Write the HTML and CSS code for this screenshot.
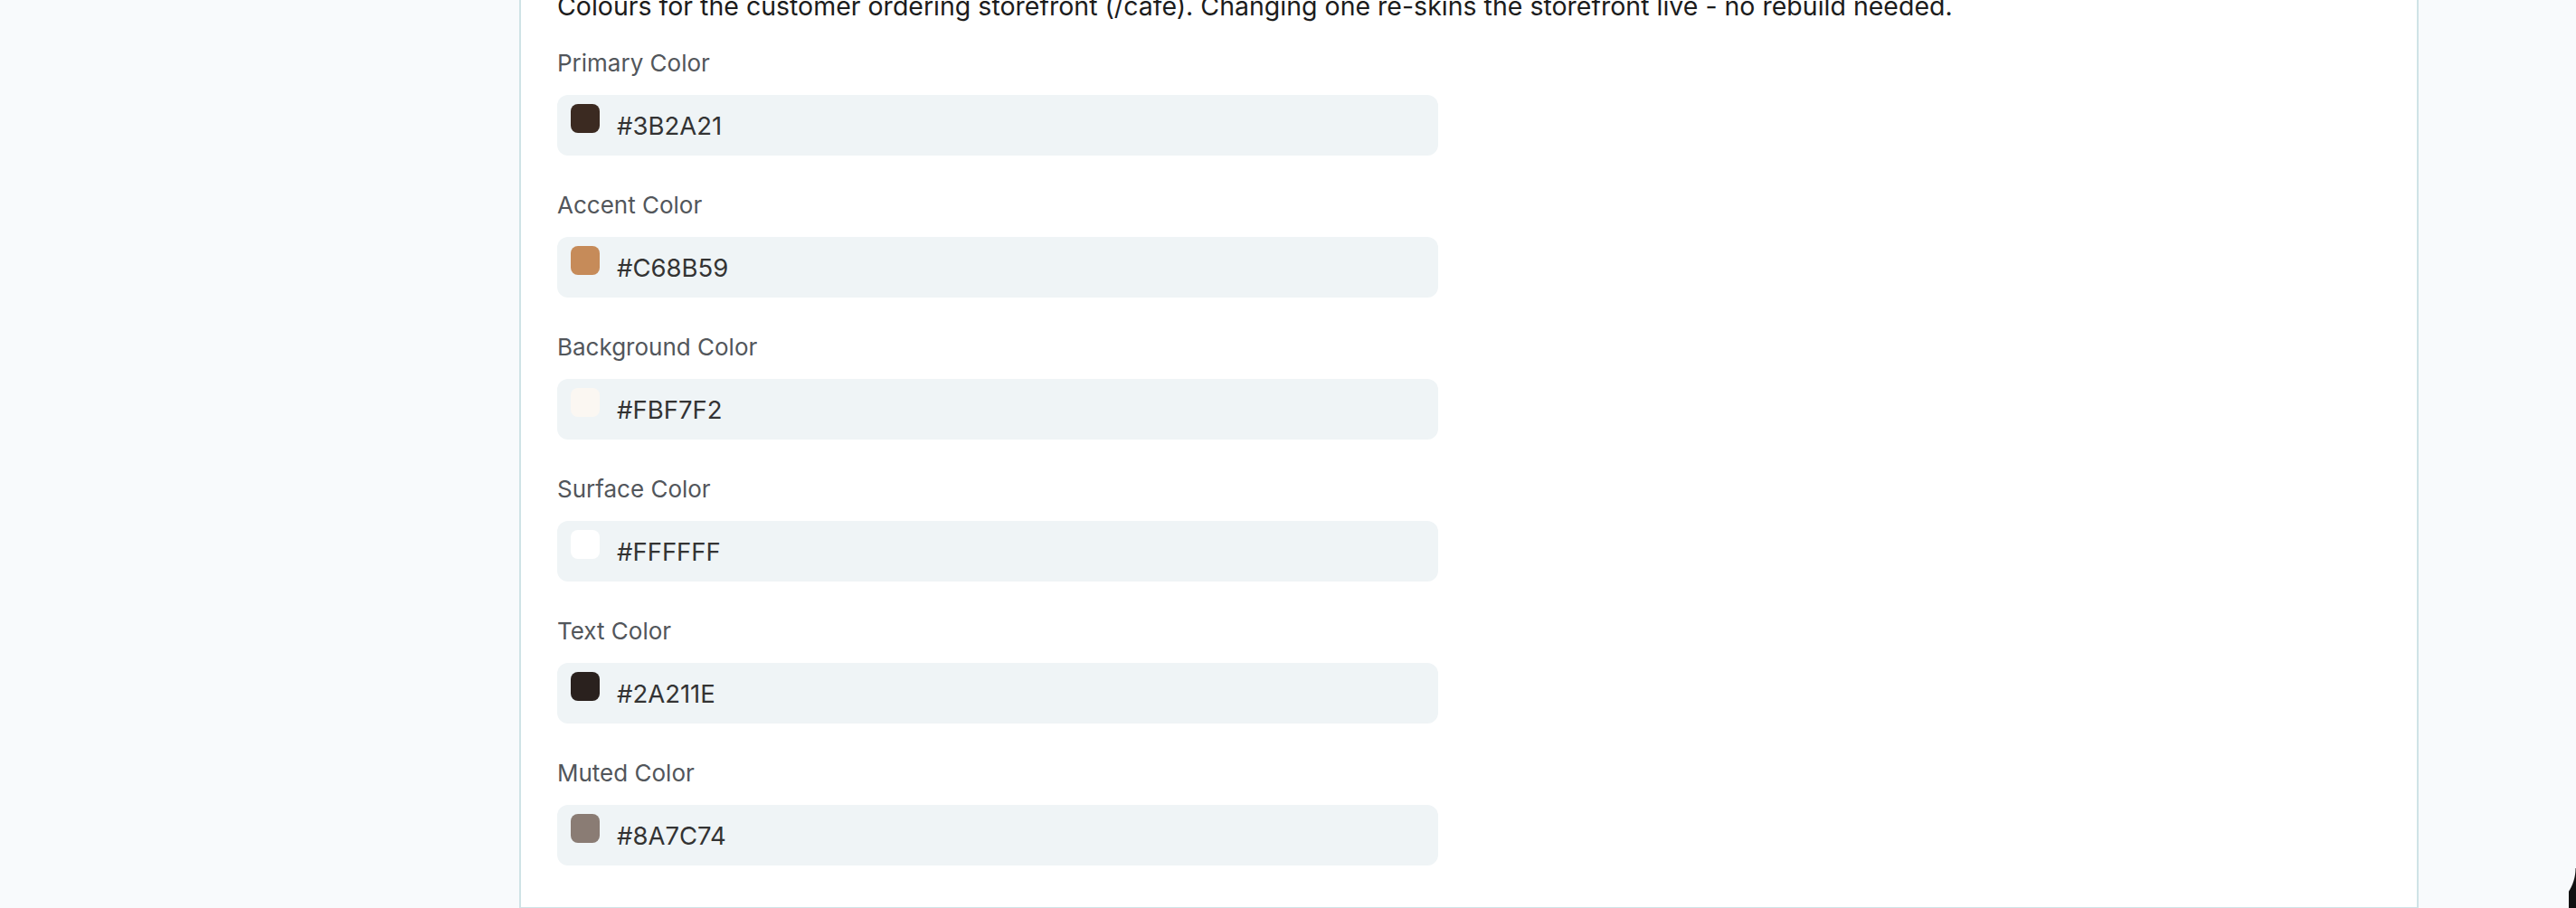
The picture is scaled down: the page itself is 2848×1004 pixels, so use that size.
FILE: index.html
```html
<!DOCTYPE html>
<html lang="en">
<head>
  <meta charset="UTF-8">
  <title>Storefront Theme</title>
  <link rel="stylesheet" href="styles.css">
</head>
<body>
  <div class="main">
    <div class="card">
      <p class="card-desc">Colours for the customer ordering storefront (/cafe). Changing one re-skins the storefront live - no rebuild needed.</p>

      <div class="fields">
        <div class="field">
          <label>Primary Color</label>
          <div class="color-input">
            <span class="swatch" style="background: #3B2A21"></span>
            <span class="hex">#3B2A21</span>
          </div>
        </div>

        <div class="field">
          <label>Accent Color</label>
          <div class="color-input">
            <span class="swatch" style="background: #C68B59"></span>
            <span class="hex">#C68B59</span>
          </div>
        </div>

        <div class="field">
          <label>Background Color</label>
          <div class="color-input">
            <span class="swatch" style="background: #FBF7F2"></span>
            <span class="hex">#FBF7F2</span>
          </div>
        </div>

        <div class="field">
          <label>Surface Color</label>
          <div class="color-input">
            <span class="swatch" style="background: #FFFFFF"></span>
            <span class="hex">#FFFFFF</span>
          </div>
        </div>

        <div class="field">
          <label>Text Color</label>
          <div class="color-input">
            <span class="swatch" style="background: #2A211E"></span>
            <span class="hex">#2A211E</span>
          </div>
        </div>

        <div class="field">
          <label>Muted Color</label>
          <div class="color-input">
            <span class="swatch" style="background: #8A7C74"></span>
            <span class="hex">#8A7C74</span>
          </div>
        </div>
      </div>
    </div>
  </div>

  <div class="window-corner"></div>
</body>
</html>
```

FILE: styles.css
```css
body {
  margin: 0;
  height: 1004px;
  overflow: hidden;
  background-color: #f8fafc;
  font-family: Inter, "Noto Sans", sans-serif;
}

.main {
  margin-left: 574px;
  width: 2100px;
}

.card {
  background-color: white;
  border: 2px solid #cfe3e6;
  border-top: none;
  padding: 0 40px 46px;
  margin-top: -13px;
}

.card-desc {
  margin: 0 0 25px;
  font-size: 28.5px;
  line-height: 40px;
  color: #1c1c1c;
}

.fields {
  display: flex;
  flex-direction: column;
  gap: 37px;
}

.field label {
  display: block;
  font-size: 26px;
  line-height: 36px;
  color: #52565b;
  margin-bottom: 17px;
}

.color-input {
  display: flex;
  align-items: center;
  width: 974px;
  height: 67px;
  box-sizing: border-box;
  padding-left: 15px;
  background-color: #eff4f6;
  border-radius: 12px;
}

.swatch {
  align-self: flex-start;
  margin-top: 10px;
  width: 32px;
  height: 32px;
  border-radius: 8px;
}

.hex {
  margin-left: 19px;
  font-size: 27.5px;
  color: #333;
}

/* rounded corner of the window frame */
.window-corner {
  position: fixed;
  right: 0;
  bottom: 0;
  width: 8px;
  height: 44px;
  background: radial-gradient(circle at -40px 0, transparent 47px, #111 48px);
}
```
